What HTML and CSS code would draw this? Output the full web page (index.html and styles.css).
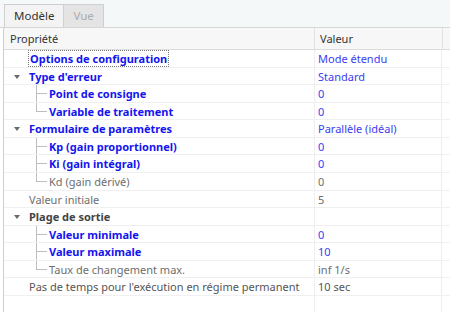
FILE: index.html
```html
<!DOCTYPE html>
<html lang="fr">
<head>
    <meta charset="UTF-8">
    <title>Propriétés</title>
    <link rel="stylesheet" href="styles.css">
</head>
<body>
    <div class="tabs">
        <div class="tab active">Modèle</div>
        <div class="tab disabled">Vue</div>
    </div>

    <div class="grid">
        <div class="head">
            <div class="cell prop">Propriété</div>
            <div class="cell val">Valeur</div>
            <div class="cell rest"></div>
        </div>

        <div class="row">
            <div class="cell prop top bold blue"><span class="focus">Options de configuration</span></div>
            <div class="cell val blue">Mode étendu</div>
        </div>
        <div class="row">
            <div class="cell prop top bold blue"><span class="arrow"></span>Type d'erreur</div>
            <div class="cell val blue">Standard</div>
        </div>
        <div class="row">
            <div class="cell prop child bold blue">Point de consigne</div>
            <div class="cell val blue">0</div>
        </div>
        <div class="row">
            <div class="cell prop child last bold blue">Variable de traitement</div>
            <div class="cell val blue">0</div>
        </div>
        <div class="row">
            <div class="cell prop top bold blue"><span class="arrow"></span>Formulaire de paramètres</div>
            <div class="cell val blue">Parallèle (idéal)</div>
        </div>
        <div class="row">
            <div class="cell prop child bold blue">Kp (gain proportionnel)</div>
            <div class="cell val blue">0</div>
        </div>
        <div class="row">
            <div class="cell prop child bold blue">Ki (gain intégral)</div>
            <div class="cell val blue">0</div>
        </div>
        <div class="row">
            <div class="cell prop child last grey">Kd (gain dérivé)</div>
            <div class="cell val grey">0</div>
        </div>
        <div class="row">
            <div class="cell prop top grey">Valeur initiale</div>
            <div class="cell val grey">5</div>
        </div>
        <div class="row">
            <div class="cell prop top bold dark"><span class="arrow"></span>Plage de sortie</div>
            <div class="cell val"></div>
        </div>
        <div class="row">
            <div class="cell prop child bold blue">Valeur minimale</div>
            <div class="cell val blue">0</div>
        </div>
        <div class="row">
            <div class="cell prop child bold blue">Valeur maximale</div>
            <div class="cell val blue">10</div>
        </div>
        <div class="row">
            <div class="cell prop child last grey">Taux de changement max.</div>
            <div class="cell val grey">inf 1/s</div>
        </div>
        <div class="row">
            <div class="cell prop top dim">Pas de temps pour l'exécution en régime permanent</div>
            <div class="cell val dim">10 sec</div>
        </div>
        <div class="row filler">
            <div class="cell prop"></div>
            <div class="cell val"></div>
        </div>
    </div>
</body>
</html>
```

FILE: styles.css
```css
body {
    margin: 0;
    font-family: "Noto Sans", "Open Sans", sans-serif;
    font-size: 11px;
    background-color: #fff;
    color: #333;
    overflow: hidden;
}
.tabs {
    display: flex;
    align-items: flex-end;
    height: 28px;
    padding-left: 4px;
    background-color: #f4f8f9;
    border-bottom: 1px solid #d6d6d6;
    box-sizing: border-box;
}
.tab {
    height: 23px;
    line-height: 22px;
    padding: 0 9px;
    border: 1px solid #cfcfcf;
    border-bottom: none;
    box-sizing: border-box;
    font-size: 11.5px;
}
.tab.active {
    background-color: #f3f3f3;
    color: #333;
}
.tab.disabled {
    background-color: #e4e4e4;
    color: #acacac;
    border-left: none;
}
.grid {
    margin-left: 3px;
    border-left: 1px solid #cfcfcf;
    height: 284px;
    overflow: hidden;
}
.head {
    display: grid;
    grid-template-columns: 310px 128px 8px;
    height: 21px;
    background-color: #f7f7f7;
    border-bottom: 1px solid #dcdcdc;
    color: #333;
}
.head .cell {
    line-height: 21px;
}
.head .prop {
    padding-left: 6px;
}
.head .val {
    border-left: 1px solid #e2e2e2;
    padding-left: 5px;
}
.head .rest {
    border-left: 1px solid #e2e2e2;
}
.row {
    display: grid;
    grid-template-columns: 310px 128px;
    height: 17.57px;
    border-bottom: 1px solid #f0f0f0;
    box-sizing: border-box;
}
.cell {
    position: relative;
    white-space: nowrap;
    overflow: hidden;
    line-height: 17px;
}
.row .val {
    border-left: 1px solid #eeeeee;
    border-right: 1px solid #eeeeee;
    padding-left: 3px;
}
.row.filler {
    height: 20px;
    border-bottom: none;
}
.prop.top {
    padding-left: 25px;
}
.prop.child {
    padding-left: 45px;
}
/* tree connectors */
.prop.child::before {
    content: "";
    position: absolute;
    left: 32px;
    top: -1px;
    bottom: -1px;
    border-left: 1px solid #bdbdbd;
}
.prop.child.last::before {
    bottom: 8px;
}
.prop.child::after {
    content: "";
    position: absolute;
    left: 32px;
    top: 8px;
    width: 11px;
    border-top: 1px solid #bdbdbd;
}
.arrow {
    position: absolute;
    left: 10px;
    top: 7px;
    border-left: 3.5px solid transparent;
    border-right: 3.5px solid transparent;
    border-top: 4px solid #6a6a6a;
}
.focus {
    outline: 1px dotted #7a7a7a;
    outline-offset: 0;
    padding: 0 1px;
}
.bold {
    font-weight: bold;
}
.blue {
    color: #1414f0;
}
.val.blue {
    color: #3c3cf5;
}
.grey {
    color: #6e6e6e;
}
.dark {
    color: #444;
}
.dim {
    color: #555;
}
```
